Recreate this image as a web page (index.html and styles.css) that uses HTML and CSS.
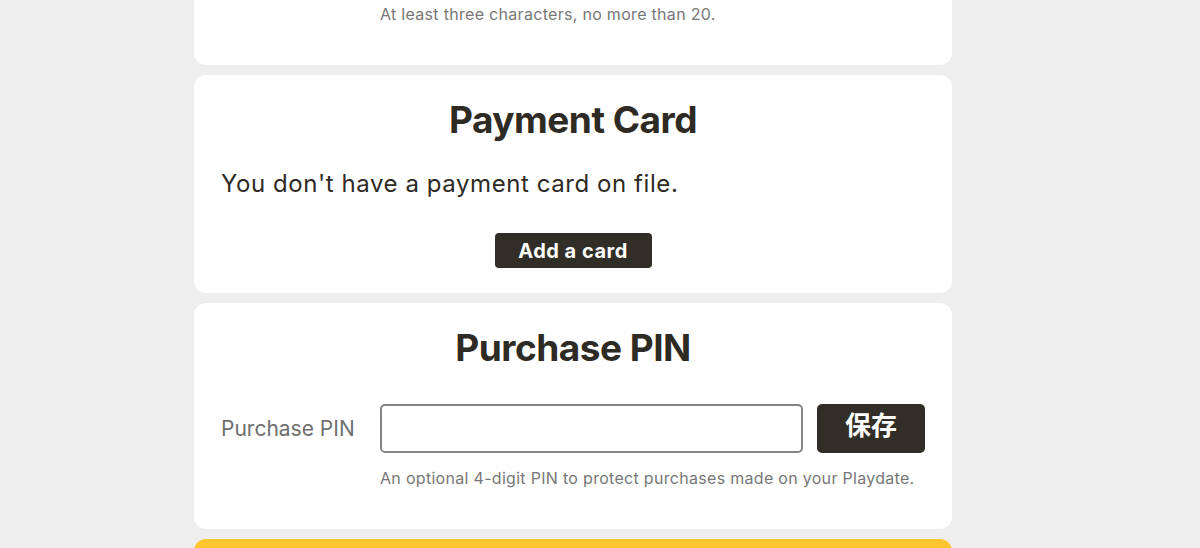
FILE: index.html
```html
<!DOCTYPE html>
<html>
<head>
<meta charset="utf-8">
<link rel="stylesheet" href="styles.css">
</head>
<body>
<main class="column">
  <section class="card card-top">
    <div class="row">
      <div class="label-col"></div>
      <p class="hint">At least three characters, no more than 20.</p>
    </div>
  </section>
  <section class="card card-payment">
    <h2 class="title">Payment Card</h2>
    <p class="lead">You don't have a payment card on file.</p>
    <div class="center">
      <button class="btn btn-add">Add a card</button>
    </div>
  </section>
  <section class="card card-pin">
    <h2 class="title">Purchase PIN</h2>
    <div class="row form-row">
      <label class="label-col label">Purchase PIN</label>
      <input class="input" type="text">
      <button class="btn btn-save">保存</button>
    </div>
    <div class="row">
      <div class="label-col"></div>
      <p class="hint">An optional 4-digit PIN to protect purchases made on your Playdate.</p>
    </div>
  </section>
  <section class="card card-yellow"></section>
</main>
</body>
</html>
```

FILE: styles.css
```css
* { box-sizing: border-box; }
html, body { margin: 0; padding: 0; }
body {
  background: #eeeeee;
  font-family: "Inter", "Liberation Sans", sans-serif;
  color: #2e2a24;
  height: 548px;
  overflow: hidden;
}
.column {
  width: 758px;
  margin-left: 194px;
  margin-top: -40px;
  display: flex;
  flex-direction: column;
  gap: 10px;
}
.card {
  background: #fff;
  border-radius: 12px;
  padding: 0 27px;
}
.card-top { height: 105px; padding-top: 44px; }
.card-payment { height: 218px; padding-top: 22px; }
.card-pin { height: 226px; padding-top: 22px; }
.card-yellow { background: #ffc52f; height: 60px; }
.row { display: flex; align-items: center; }
.label-col { width: 159px; flex: none; }
.hint {
  margin: 0;
  font-size: 16px;
  color: #777777;
  line-height: 20px;
  letter-spacing: 0.3px;
}
.title {
  margin: 0;
  text-align: center;
  font-size: 37px;
  font-weight: 700;
  line-height: 46px;
  letter-spacing: -0.5px;
}
.lead {
  margin: 26px 0 0;
  font-size: 24px;
  line-height: 30px;
  font-weight: 400;
  letter-spacing: 0.57px;
}
.center { display: flex; justify-content: center; margin-top: 34px; }
.btn {
  background: #312d27;
  color: #fff;
  border: none;
  font-family: "Inter", "Noto Sans CJK SC", sans-serif;
  font-weight: 700;
}
.btn-add {
  width: 157px;
  height: 35px;
  border-radius: 4px;
  font-size: 20px;
  letter-spacing: 0.5px;
  padding: 0;
}
.form-row { margin-top: 33px; }
.label { font-size: 21px; color: #6f6f6f; }
.input {
  width: 423px;
  height: 49px;
  border: 2px solid #858585;
  border-radius: 5px;
  background: #fff;
  flex: none;
}
.btn-save {
  width: 108px;
  height: 49px;
  border-radius: 5px;
  margin-left: 14px;
  font-family: "Noto Sans CJK SC", sans-serif;
  font-size: 26px;
  padding: 0 0 10px;
}
.card-pin .hint { margin-top: 15px; }
```
